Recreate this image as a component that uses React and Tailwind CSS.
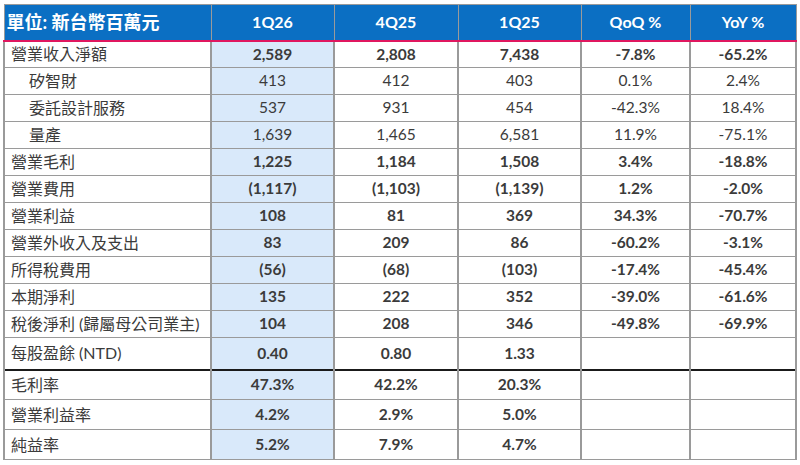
import React from "react";

const rows = [
  { label: "營業收入淨額", v: ["2,589", "2,808", "7,438", "-7.8%", "-65.2%"], bold: true },
  { label: "矽智財", v: ["413", "412", "403", "0.1%", "2.4%"], sub: true },
  { label: "委託設計服務", v: ["537", "931", "454", "-42.3%", "18.4%"], sub: true },
  { label: "量產", v: ["1,639", "1,465", "6,581", "11.9%", "-75.1%"], sub: true },
  { label: "營業毛利", v: ["1,225", "1,184", "1,508", "3.4%", "-18.8%"], bold: true },
  { label: "營業費用", v: ["(1,117)", "(1,103)", "(1,139)", "1.2%", "-2.0%"], bold: true },
  { label: "營業利益", v: ["108", "81", "369", "34.3%", "-70.7%"], bold: true },
  { label: "營業外收入及支出", v: ["83", "209", "86", "-60.2%", "-3.1%"], bold: true },
  { label: "所得稅費用", v: ["(56)", "(68)", "(103)", "-17.4%", "-45.4%"], bold: true },
  { label: "本期淨利", v: ["135", "222", "352", "-39.0%", "-61.6%"], bold: true },
  { label: "稅後淨利 (歸屬母公司業主)", v: ["104", "208", "346", "-49.8%", "-69.9%"], bold: true },
  { label: "每股盈餘 (NTD)", v: ["0.40", "0.80", "1.33", "", ""], bold: true, tall: true },
  { label: "毛利率", v: ["47.3%", "42.2%", "20.3%", "", ""], bold: true, ratio: true, first: true },
  { label: "營業利益率", v: ["4.2%", "2.9%", "5.0%", "", ""], bold: true, ratio: true },
  { label: "純益率", v: ["5.2%", "7.9%", "4.7%", "", ""], bold: true, ratio: true },
];

const font = { fontFamily: "Lato, 'Noto Sans CJK TC', sans-serif" };

export default function App() {
  return (
    <div className="w-[800px] h-[465px] bg-white pt-[4px] pl-[3px]" style={font}>
      <table className="border-collapse table-fixed w-[792px] text-[#3b3b3b]">
        <colgroup>
          <col className="w-[207px]" />
          <col className="w-[123px]" />
          <col className="w-[124px]" />
          <col className="w-[123px]" />
          <col className="w-[109px]" />
          <col className="w-[106px]" />
        </colgroup>
        <thead>
          <tr className="h-[36px] bg-[#0b6fc3] text-white font-bold border-b-[2px] border-b-[#e0175f]">
            <th className="text-left pl-[2px] text-[18px] font-bold border border-[#9a9a9a] border-b-[#e0175f] border-b-[2px] whitespace-nowrap">單位: 新台幣百萬元</th>
            <th className="text-[16px] border border-[#9a9a9a] border-b-[#e0175f] border-b-[2px]">1Q26</th>
            <th className="text-[16px] border border-[#9a9a9a] border-b-[#e0175f] border-b-[2px]">4Q25</th>
            <th className="text-[16px] border border-[#9a9a9a] border-b-[#e0175f] border-b-[2px]">1Q25</th>
            <th className="text-[16px] border border-[#9a9a9a] border-b-[#e0175f] border-b-[2px]">QoQ %</th>
            <th className="text-[16px] border border-[#9a9a9a] border-b-[#e0175f] border-b-[2px]">YoY %</th>
          </tr>
        </thead>
        <tbody>
          {rows.map((r, i) => (
            <tr
              key={i}
              className={
                (r.tall ? "h-[32px] " : r.ratio ? "h-[30px] " : "h-[27px] ") +
                (r.first ? "border-t-[2px] border-t-[#1a1a1a]" : "")
              }
            >
              <td
                className={
                  "text-[16px] leading-none border-x-[2px] border-y border-[#9a9a9a] whitespace-nowrap " +
                  (r.sub ? "pl-[24px]" : "pl-[6px]") +
                  (r.first ? " border-t-[2px] border-t-[#1a1a1a]" : "")
                }
              >
                {r.label}
              </td>
              {r.v.map((val, j) => (
                <td
                  key={j}
                  className={
                    "text-center text-[15.5px] leading-none border-x-[2px] border-y border-[#9a9a9a] " +
                    (r.bold ? "font-bold " : "") +
                    (j === 0 ? "bg-[#d9e9fa]" : "") +
                    (r.first ? " border-t-[2px] border-t-[#1a1a1a]" : "")
                  }
                >
                  {val}
                </td>
              ))}
            </tr>
          ))}
        </tbody>
      </table>
    </div>
  );
}
